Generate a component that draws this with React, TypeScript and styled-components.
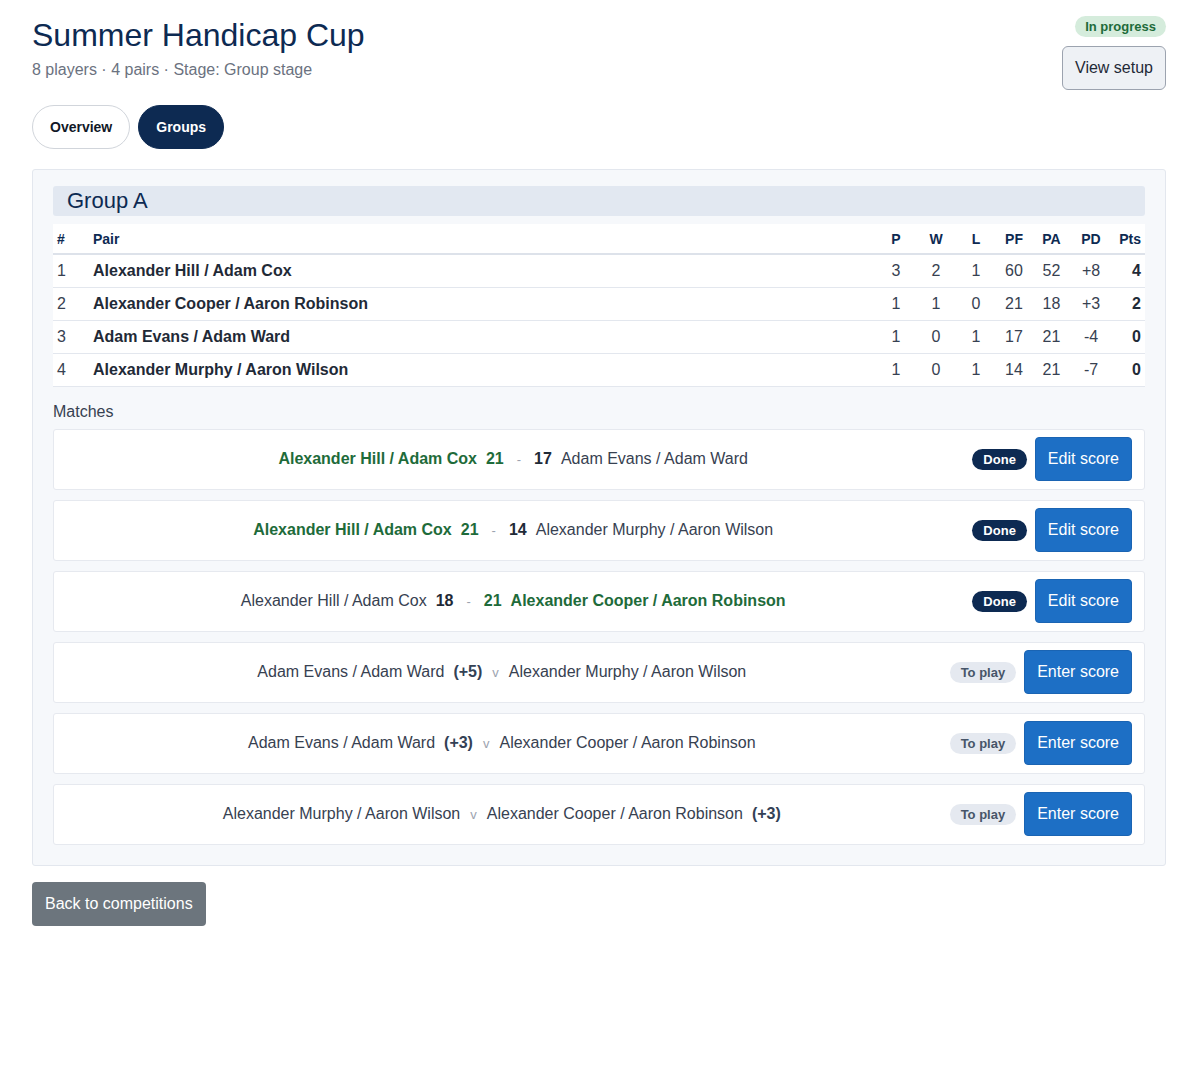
import React from 'react';
import styled, { createGlobalStyle } from 'styled-components';

const Global = createGlobalStyle`
  *, *::before, *::after { box-sizing: border-box; }
  body {
    margin: 0;
    background: #fff;
    font-family: 'Liberation Sans', Arial, sans-serif;
    color: #1f2a37;
  }
`;

const Page = styled.div`
  padding: 16px 24px 40px 32px;
`;

const Header = styled.div`
  display: flex;
  justify-content: space-between;
  align-items: flex-start;
`;

const Title = styled.h1`
  margin: 0;
  font-size: 32px;
  font-weight: 400;
  color: #0d2a52;
  line-height: 38px;
`;

const Sub = styled.div`
  margin-top: 7px;
  font-size: 16px;
  color: #6b7280;
`;

const HeaderRight = styled.div`
  display: flex;
  flex-direction: column;
  align-items: flex-end;
  gap: 9px;
`;

const StatusPill = styled.span`
  background: #d5ecdc;
  color: #1e6b3a;
  font-size: 13px;
  font-weight: 700;
  padding: 3px 10px;
  border-radius: 12px;
`;

const SetupButton = styled.button`
  font-family: inherit;
  font-size: 16px;
  color: #1f2a37;
  background: #eef1f5;
  border: 1px solid #9ca3af;
  border-radius: 6px;
  padding: 0 12px;
  height: 44px;
`;

const Tabs = styled.div`
  display: flex;
  gap: 8px;
  margin-top: 15px;
`;

const Tab = styled.button<{ $active?: boolean }>`
  font-family: inherit;
  font-size: 14px;
  font-weight: 700;
  height: 44px;
  padding: 0 17px;
  border-radius: 22px;
  border: 1px solid ${p => (p.$active ? '#0d2a52' : '#d1d5db')};
  background: ${p => (p.$active ? '#0d2a52' : '#fff')};
  color: ${p => (p.$active ? '#fff' : '#111827')};
`;

const Panel = styled.div`
  margin-top: 20px;
  background: #f6f8fb;
  border: 1px solid #e3e7ee;
  border-radius: 3px;
  padding: 16px 20px 20px;
`;

const GroupTitle = styled.h2`
  margin: 0;
  background: #e2e8f1;
  border-radius: 3px;
  font-size: 22px;
  font-weight: 400;
  color: #0d2a52;
  padding: 0 14px;
  height: 30px;
  line-height: 30px;
`;

const Table = styled.table`
  width: 100%;
  table-layout: fixed;
  margin-top: 8px;
  border-collapse: collapse;
  background: #fff;
  font-size: 16px;
`;

const Th = styled.th<{ $w?: number; $align?: string }>`
  width: ${p => (p.$w ? `${p.$w}px` : 'auto')};
  text-align: ${p => p.$align || 'center'};
  font-size: 14px;
  font-weight: 700;
  color: #0d2a52;
  height: 30px;
  padding: 0 4px;
  border-bottom: 2px solid #dde2ea;
`;

const Td = styled.td<{ $align?: string; $bold?: boolean }>`
  text-align: ${p => p.$align || 'center'};
  font-weight: ${p => (p.$bold ? 700 : 400)};
  color: ${p => (p.$bold ? '#1f2a37' : '#374151')};
  height: 33px;
  padding: 0 4px;
  border-bottom: 1px solid #e3e7ee;
`;

const Label = styled.div`
  margin: 16px 0 8px;
  font-size: 16px;
  color: #374151;
`;

const Matches = styled.div`
  display: flex;
  flex-direction: column;
  gap: 10px;
`;

const Card = styled.div`
  display: flex;
  align-items: center;
  height: 61px;
  background: #fff;
  border: 1px solid #e6e9ef;
  border-radius: 3px;
  padding: 0 12px 0 0;
`;

const MatchText = styled.div`
  flex: 1;
  display: flex;
  justify-content: center;
  align-items: center;
  gap: 9px;
  font-size: 16px;
  color: #374151;
  white-space: nowrap;
`;

const Side = styled.span<{ $win?: boolean }>`
  color: ${p => (p.$win ? '#1e6b3a' : '#374151')};
  font-weight: ${p => (p.$win ? 700 : 400)};
`;

const Score = styled.span<{ $win?: boolean }>`
  font-weight: 700;
  color: ${p => (p.$win ? '#1e6b3a' : '#1f2a37')};
`;

const Sep = styled.span<{ $wide?: boolean }>`
  color: #9ca3af;
  font-size: 13px;
  margin: 0 ${p => (p.$wide ? 4 : 1)}px;
`;

const Hcp = styled.span`
  font-weight: 700;
  color: #334155;
`;

const Actions = styled.div`
  display: flex;
  align-items: center;
  gap: 8px;
`;

const Badge = styled.span<{ $done?: boolean }>`
  font-size: 13px;
  font-weight: 700;
  padding: 3px 11px;
  border-radius: 11px;
  background: ${p => (p.$done ? '#0d2a52' : '#e5e9f0')};
  color: ${p => (p.$done ? '#fff' : '#475569')};
`;

const ScoreButton = styled.button`
  font-family: inherit;
  font-size: 16px;
  color: #fff;
  background: #1d6fc5;
  border: 1px solid #1a64b3;
  border-radius: 4px;
  height: 44px;
  padding: 0 12px;
`;

const BackButton = styled.button`
  margin-top: 16px;
  font-family: inherit;
  font-size: 16px;
  color: #fff;
  background: #6c757d;
  border: none;
  border-radius: 4px;
  height: 44px;
  padding: 0 13px;
`;

const standings = [
  ['1', 'Alexander Hill / Adam Cox', 3, 2, 1, 60, 52, '+8', 4],
  ['2', 'Alexander Cooper / Aaron Robinson', 1, 1, 0, 21, 18, '+3', 2],
  ['3', 'Adam Evans / Adam Ward', 1, 0, 1, 17, 21, '-4', 0],
  ['4', 'Alexander Murphy / Aaron Wilson', 1, 0, 1, 14, 21, '-7', 0],
];

type Match = {
  a: string;
  b: string;
  sa?: number;
  sb?: number;
  ha?: string;
  hb?: string;
};

const matches: Match[] = [
  { a: 'Alexander Hill / Adam Cox', b: 'Adam Evans / Adam Ward', sa: 21, sb: 17 },
  { a: 'Alexander Hill / Adam Cox', b: 'Alexander Murphy / Aaron Wilson', sa: 21, sb: 14 },
  { a: 'Alexander Hill / Adam Cox', b: 'Alexander Cooper / Aaron Robinson', sa: 18, sb: 21 },
  { a: 'Adam Evans / Adam Ward', b: 'Alexander Murphy / Aaron Wilson', ha: '(+5)' },
  { a: 'Adam Evans / Adam Ward', b: 'Alexander Cooper / Aaron Robinson', ha: '(+3)' },
  { a: 'Alexander Murphy / Aaron Wilson', b: 'Alexander Cooper / Aaron Robinson', hb: '(+3)' },
];

const App: React.FC = () => (
  <Page>
    <Global />
    <Header>
      <div>
        <Title>Summer Handicap Cup</Title>
        <Sub>8 players · 4 pairs · Stage: Group stage</Sub>
      </div>
      <HeaderRight>
        <StatusPill>In progress</StatusPill>
        <SetupButton>View setup</SetupButton>
      </HeaderRight>
    </Header>

    <Tabs>
      <Tab>Overview</Tab>
      <Tab $active>Groups</Tab>
    </Tabs>

    <Panel>
      <GroupTitle>Group A</GroupTitle>
      <Table>
        <thead>
          <tr>
            <Th $w={36} $align="left">#</Th>
            <Th $align="left">Pair</Th>
            <Th $w={40}>P</Th>
            <Th $w={40}>W</Th>
            <Th $w={40}>L</Th>
            <Th $w={36}>PF</Th>
            <Th $w={39}>PA</Th>
            <Th $w={40}>PD</Th>
            <Th $w={34} $align="right">Pts</Th>
          </tr>
        </thead>
        <tbody>
          {standings.map(r => (
            <tr key={r[0] as string}>
              <Td $align="left">{r[0]}</Td>
              <Td $align="left" $bold>{r[1]}</Td>
              <Td>{r[2]}</Td>
              <Td>{r[3]}</Td>
              <Td>{r[4]}</Td>
              <Td>{r[5]}</Td>
              <Td>{r[6]}</Td>
              <Td>{r[7]}</Td>
              <Td $align="right" $bold>{r[8]}</Td>
            </tr>
          ))}
        </tbody>
      </Table>

      <Label>Matches</Label>
      <Matches>
        {matches.map((m, i) => {
          const done = m.sa !== undefined;
          const aWin = done && m.sa! > m.sb!;
          const bWin = done && m.sb! > m.sa!;
          return (
            <Card key={i}>
              <MatchText>
                <Side $win={aWin}>{m.a}</Side>
                {done ? (
                  <>
                    <Score $win={aWin}>{m.sa}</Score>
                    <Sep $wide>-</Sep>
                    <Score $win={bWin}>{m.sb}</Score>
                  </>
                ) : (
                  <>
                    {m.ha && <Hcp>{m.ha}</Hcp>}
                    <Sep>v</Sep>
                  </>
                )}
                <Side $win={bWin}>{m.b}</Side>
                {m.hb && <Hcp>{m.hb}</Hcp>}
              </MatchText>
              <Actions>
                <Badge $done={done}>{done ? 'Done' : 'To play'}</Badge>
                <ScoreButton>{done ? 'Edit score' : 'Enter score'}</ScoreButton>
              </Actions>
            </Card>
          );
        })}
      </Matches>
    </Panel>

    <BackButton>Back to competitions</BackButton>
  </Page>
);

export default App;
